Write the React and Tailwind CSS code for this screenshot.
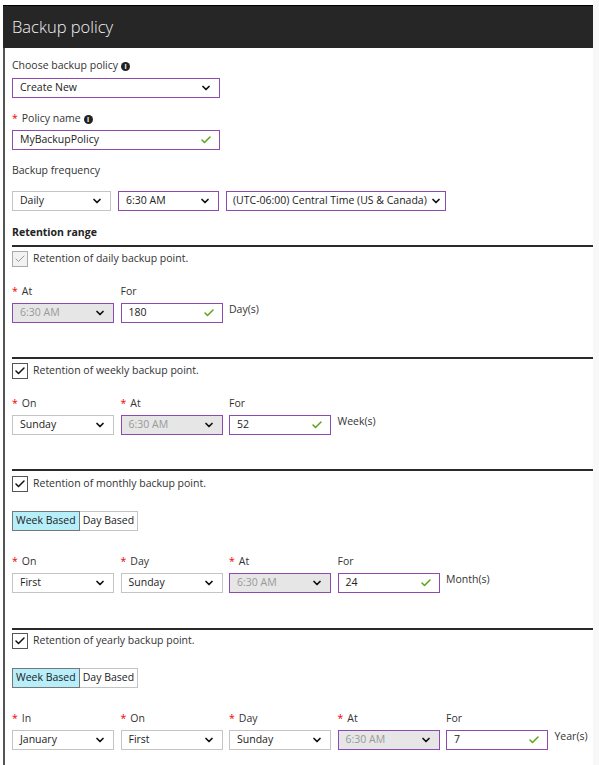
import { ChevronDown, Check } from 'lucide-react';

const font = { fontFamily: '"Segoe UI", "Open Sans", "Liberation Sans", sans-serif' };

function Info() {
  return (
    <span className="ml-[3px] inline-flex h-[9px] w-[9px] items-center justify-center rounded-full bg-[#222] text-[7px] font-bold leading-none text-white">
      i
    </span>
  );
}

function Label({ text, req }) {
  return (
    <div className="flex h-[16px] items-center text-[10.5px] text-[#333]">
      {req ? <span className="mr-[4px] text-[#e00]">*</span> : null}
      {text}
    </div>
  );
}

function Select({ value, w = 'w-[102px]', purple, disabled, tight }) {
  return (
    <div
      className={`flex h-[20px] ${w} items-center justify-between whitespace-nowrap border ${tight ? 'pl-[6px] pr-[3px]' : 'px-[7px]'} text-[10.5px] ${
        purple ? 'border-[#8d4bb0]' : 'border-[#c4c4c4]'
      } ${disabled ? 'bg-[#e6e6e6] text-[#999]' : 'bg-white text-[#222]'}`}
    >
      <span>{value}</span>
      <ChevronDown size={12} strokeWidth={3.5} className="shrink-0 text-[#111]" />
    </div>
  );
}

function Input({ value, w = 'w-[102px]' }) {
  return (
    <div className={`flex h-[20px] ${w} items-center justify-between border border-[#8d4bb0] bg-white px-[7px] text-[10.5px] text-[#222]`}>
      <span>{value}</span>
      <Check size={12} strokeWidth={3} className="text-[#5ba418]" />
    </div>
  );
}

function Checkbox({ text, disabled }) {
  return (
    <div className="flex items-center gap-[5px]">
      <div
        className={`flex h-[16px] w-[16px] items-center justify-center border ${
          disabled ? 'border-[#aaa] bg-[#f2f2f2] text-[#999]' : 'border-[#555] bg-white text-[#111]'
        }`}
      >
        <Check size={12} strokeWidth={disabled ? 2 : 3} />
      </div>
      <span className="text-[10.5px] text-[#333]">{text}</span>
    </div>
  );
}

function Toggle() {
  return (
    <div className="flex h-[20px] w-fit text-[10.5px] text-[#222]">
      <div className="flex items-center border border-[#777] bg-[#b6eefa] px-[3px]">Week Based</div>
      <div className="flex items-center border border-l-0 border-[#c4c4c4] bg-white px-[3px]">Day Based</div>
    </div>
  );
}

function Field({ label, req, children }) {
  return (
    <div className="flex flex-col gap-[3px]">
      <Label text={label} req={req} />
      {children}
    </div>
  );
}

function Unit({ text }) {
  return <div className="mt-[18px] text-[10.5px] text-[#333]">{text}</div>;
}

function Rule() {
  return <div className="h-[2px] w-full bg-[#2a2a2a]" />;
}

export default function App() {
  return (
    <div className="flex min-h-[765px] w-[599px] bg-white" style={font}>
      <div className="ml-[3px] w-[590px] pt-[5px]">
        <div className="flex h-[43px] items-center border-t border-black bg-[#262626] pl-[9px] text-[16.5px] font-light text-[#f2f2f2]">
          Backup policy
        </div>
        <div className="border-l-2 border-[#555] pb-[16px] pl-[7px]">
          <div className="pt-[10px]">
            <div className="flex h-[16px] items-center text-[10.5px] text-[#333]">
              Choose backup policy
              <Info />
            </div>
          </div>
          <div className="mt-[4px]">
            <Select value="Create New" w="w-[208px]" purple />
          </div>
          <div className="mt-[13px] flex h-[16px] items-center text-[10.5px] text-[#333]">
            <span className="mr-[4px] text-[#e00]">*</span>
            Policy name
            <Info />
          </div>
          <div className="mt-[3px]">
            <Input value="MyBackupPolicy" w="w-[208px]" />
          </div>
          <div className="mt-[13px]">
            <Label text="Backup frequency" />
          </div>
          <div className="mt-[12px] flex gap-[7px]">
            <Select value="Daily" w="w-[99px]" />
            <Select value="6:30 AM" w="w-[101px]" purple />
            <Select value="(UTC-06:00) Central Time (US & Canada)" w="w-[220px]" purple tight />
          </div>
          <div className="mt-[14px] flex h-[16px] items-center text-[10.5px] font-bold text-[#222]">Retention range</div>
          <div className="mt-[4px]">
            <Rule />
          </div>

          <div className="mt-[4px]">
            <Checkbox text="Retention of daily backup point." disabled />
          </div>
          <div className="mt-[17px] flex gap-[6.5px]">
            <Field label="At" req>
              <Select value="6:30 AM" purple disabled />
            </Field>
            <Field label="For">
              <Input value="180" />
            </Field>
            <Unit text="Day(s)" />
          </div>

          <div className="mt-[34px]">
            <Rule />
          </div>
          <div className="mt-[4px]">
            <Checkbox text="Retention of weekly backup point." />
          </div>
          <div className="mt-[17px] flex gap-[6.5px]">
            <Field label="On" req>
              <Select value="Sunday" />
            </Field>
            <Field label="At" req>
              <Select value="6:30 AM" purple disabled />
            </Field>
            <Field label="For">
              <Input value="52" />
            </Field>
            <Unit text="Week(s)" />
          </div>

          <div className="mt-[34px]">
            <Rule />
          </div>
          <div className="mt-[5px]">
            <Checkbox text="Retention of monthly backup point." />
          </div>
          <div className="mt-[19px]">
            <Toggle />
          </div>
          <div className="mt-[23px] flex gap-[6.5px]">
            <Field label="On" req>
              <Select value="First" />
            </Field>
            <Field label="Day" req>
              <Select value="Sunday" />
            </Field>
            <Field label="At" req>
              <Select value="6:30 AM" purple disabled />
            </Field>
            <Field label="For">
              <Input value="24" />
            </Field>
            <Unit text="Month(s)" />
          </div>

          <div className="mt-[35px]">
            <Rule />
          </div>
          <div className="mt-[3px]">
            <Checkbox text="Retention of yearly backup point." />
          </div>
          <div className="mt-[19px]">
            <Toggle />
          </div>
          <div className="mt-[23px] flex gap-[6.5px]">
            <Field label="In" req>
              <Select value="January" />
            </Field>
            <Field label="On" req>
              <Select value="First" />
            </Field>
            <Field label="Day" req>
              <Select value="Sunday" />
            </Field>
            <Field label="At" req>
              <Select value="6:30 AM" purple disabled />
            </Field>
            <Field label="For">
              <Input value="7" />
            </Field>
            <Unit text="Year(s)" />
          </div>
        </div>
      </div>
      <div className="flex-1 bg-[#f8f8f8]" />
    </div>
  );
}
